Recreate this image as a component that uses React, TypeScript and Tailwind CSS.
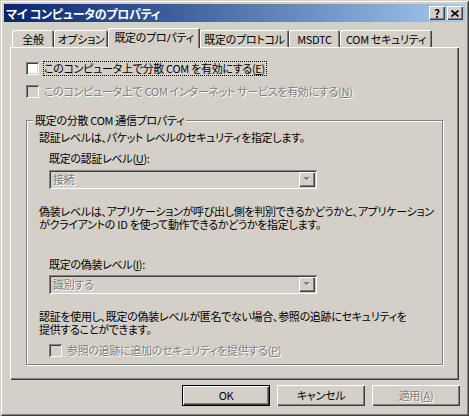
const raised =
  'shadow-[inset_1px_1px_0_#ffffff,inset_-1px_-1px_0_#404040,inset_-2px_-2px_0_#808080]';
const sunken =
  'shadow-[inset_1px_1px_0_#808080,inset_-1px_-1px_0_#ffffff,inset_2px_2px_0_#404040,inset_-2px_-2px_0_#d4d0c8]';
const grayText = 'text-[#808080] [text-shadow:1px_1px_0_#ffffff]';

const tabs = [
  { label: '全般', w: 'w-[42px]' },
  { label: 'オプション', w: 'w-[54px]' },
  { label: '既定のプロパティ', w: 'w-[92px]', active: true },
  { label: '既定のプロトコル', w: 'w-[89px]' },
  { label: 'MSDTC', w: 'w-[51px]' },
  { label: 'COM セキュリティ', w: 'w-[92px]' },
];

function Checkbox({ disabled }: { disabled?: boolean }) {
  return (
    <span
      className={`block h-[13px] w-[13px] shrink-0 ${sunken} ${
        disabled ? 'bg-[#d4d0c8]' : 'bg-white'
      }`}
    />
  );
}

function Combo({ value }: { value: string }) {
  return (
    <div className={`flex h-[19px] w-[268px] items-center bg-[#d4d0c8] pl-[4px] pr-[2px] ${sunken}`}>
      <span className={`flex-1 leading-[13px] ${grayText}`}>{value}</span>
      <span className={`flex h-[15px] w-[16px] items-center justify-center bg-[#d4d0c8] ${raised}`}>
        <svg width="8" height="5" viewBox="0 0 8 5">
          <path d="M1 1h6L4 4z" fill="#ffffff" />
          <path d="M0 0h7L3.5 3.5z" fill="#808080" />
        </svg>
      </span>
    </div>
  );
}

export default function App() {
  return (
    <div
      className="flex h-[416px] w-[469px] flex-col bg-[#d4d0c8] p-[4px] font-['Noto_Sans_CJK_JP',sans-serif] text-[11px] leading-[13px] tracking-[-0.3px] text-black [font-feature-settings:'palt'] shadow-[inset_1px_1px_0_#d4d0c8,inset_-1px_-1px_0_#404040,inset_2px_2px_0_#ffffff,inset_-2px_-2px_0_#808080]"
    >
      {/* title bar */}
      <div className="flex h-[18px] items-center bg-gradient-to-r from-[#0a246a] to-[#a6caf0] pl-[2px] pr-[2px]">
        <span className="flex-1 text-[12px] font-bold text-white">マイ コンピュータのプロパティ</span>
        <span className={`flex h-[14px] w-[16px] items-center justify-center bg-[#d4d0c8] ${raised}`}>
          <span className="text-[11px] font-bold leading-[11px]">?</span>
        </span>
        <span className={`ml-[2px] flex h-[14px] w-[16px] items-center justify-center bg-[#d4d0c8] ${raised}`}>
          <svg width="8" height="7" viewBox="0 0 8 7">
            <path d="M0.5 0.5l7 6M7.5 0.5l-7 6" stroke="#000" strokeWidth="1.6" />
          </svg>
        </span>
      </div>

      <div className="flex flex-1 flex-col px-[6px] pt-[6px]">
        {/* tabs */}
        <div className="ml-[2px] flex h-[19px] items-end">
          {tabs.map((t) => (
            <div
              key={t.label}
              className={`flex items-center justify-center rounded-t-[2px] bg-[#d4d0c8] whitespace-nowrap shadow-[inset_1px_1px_0_#ffffff,inset_-1px_0_0_#404040,inset_-2px_0_0_#808080] ${t.w} ${
                t.active ? 'relative z-10 -mb-[1px] h-[20px] pb-[2px]' : 'h-[17px] pt-[1px]'
              }`}
            >
              {t.label}
            </div>
          ))}
        </div>

        {/* panel */}
        <div className={`flex h-[333px] flex-col pl-[16px] ${raised}`}>
          <div className="mt-[14px] flex h-[15px] items-center">
            <Checkbox />
            <span className="ml-[4px] border border-dotted border-black pr-[1px] leading-[13px] whitespace-nowrap">
              このコンピュータ上で分散 COM を有効にする(<span className="underline">E</span>)
            </span>
          </div>
          <div className="mt-[8px] flex h-[15px] items-center">
            <Checkbox disabled />
            <span className={`ml-[5px] whitespace-nowrap ${grayText}`}>
              このコンピュータ上で COM インターネット サービスを有効にする(<span className="underline">N</span>)
            </span>
          </div>

          {/* group box */}
          <div className="relative mt-[21px] flex h-[245px] w-[417px] flex-col border border-[#808080] pl-[12px] shadow-[inset_1px_1px_0_#ffffff,1px_1px_0_#ffffff]">
            <span className="absolute left-[6px] top-[-7px] bg-[#d4d0c8] px-[2px] whitespace-nowrap">
              既定の分散 COM 通信プロパティ
            </span>
            <p className="mt-[10px] whitespace-nowrap">認証レベルは、パケット レベルのセキュリティを指定します。</p>
            <div className="ml-[10px] flex flex-col">
              <span className="mt-[8px]">
                既定の認証レベル(<span className="underline">U</span>):
              </span>
              <div className="mt-[5px]">
                <Combo value="接続" />
              </div>
            </div>
            <p className="mt-[16px] whitespace-nowrap">
              偽装レベルは、アプリケーションが呼び出し側を判別できるかどうかと、アプリケーション
              <br />
              がクライアントの ID を使って動作できるかどうかを指定します。
            </p>
            <div className="ml-[10px] flex flex-col">
              <span className="mt-[27px]">
                既定の偽装レベル(<span className="underline">I</span>):
              </span>
              <div className="mt-[4px]">
                <Combo value="識別する" />
              </div>
            </div>
            <p className="mt-[16px] whitespace-nowrap">
              認証を使用し、既定の偽装レベルが匿名でない場合、参照の追跡にセキュリティを
              <br />
              提供することができます。
            </p>
            <div className="ml-[10px] mt-[7px] flex h-[15px] items-center">
              <Checkbox disabled />
              <span className={`ml-[5px] whitespace-nowrap ${grayText}`}>
                参照の追跡に追加のセキュリティを提供する(<span className="underline">P</span>)
              </span>
            </div>
          </div>
        </div>

        {/* buttons */}
        <div className="-mr-[1px] mt-[5px] flex justify-end gap-[7px]">
          <button className="flex h-[21px] w-[88px] items-center justify-center bg-[#d4d0c8] shadow-[inset_0_0_0_1px_#000000,inset_2px_2px_0_#ffffff,inset_-2px_-2px_0_#404040,inset_-3px_-3px_0_#808080]">
            OK
          </button>
          <button className={`flex h-[21px] w-[88px] items-center justify-center bg-[#d4d0c8] ${raised}`}>
            キャンセル
          </button>
          <button className={`flex h-[21px] w-[88px] items-center justify-center bg-[#d4d0c8] ${raised}`}>
            <span className={grayText}>
              適用(<span className="underline">A</span>)
            </span>
          </button>
        </div>
      </div>
    </div>
  );
}
